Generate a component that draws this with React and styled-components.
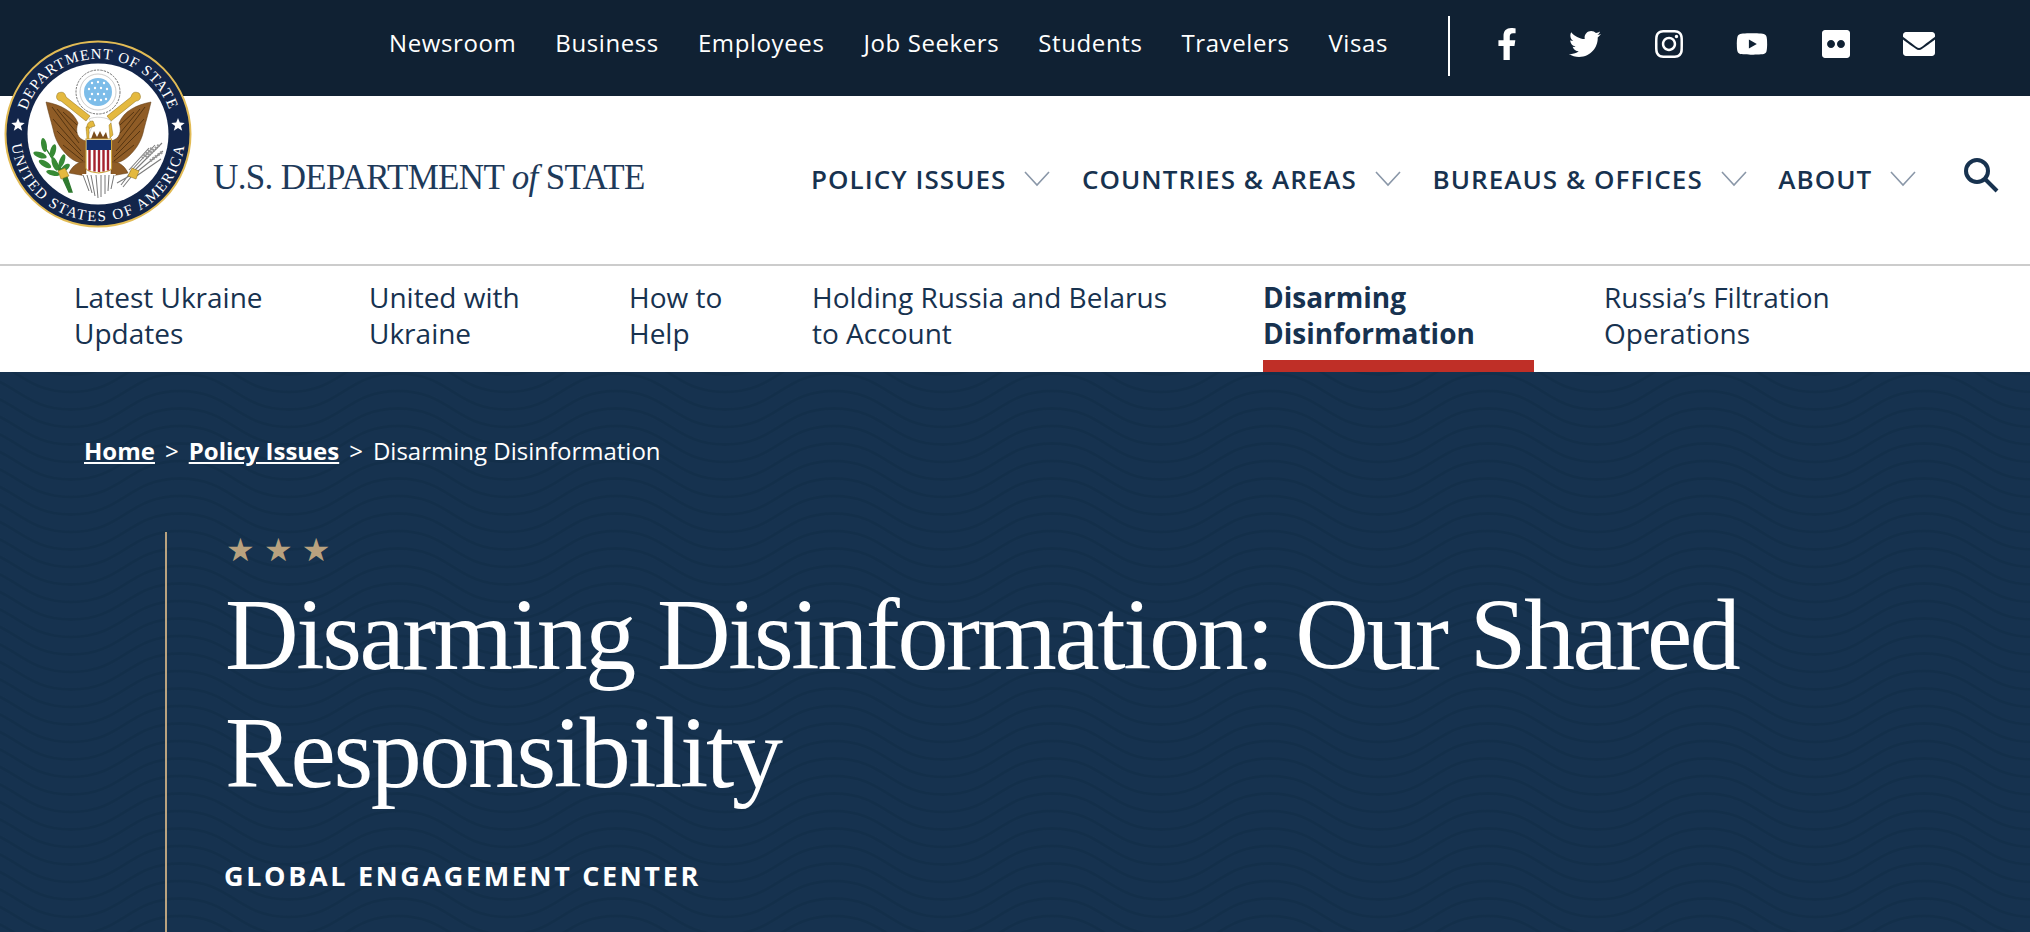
import React from 'react';
import styled, { createGlobalStyle } from 'styled-components';
import { FaFacebookF, FaTwitter, FaInstagram, FaYoutube, FaFlickr, FaEnvelope } from 'react-icons/fa';

const GlobalStyle = createGlobalStyle`
    html, body {
        margin: 0;
        padding: 0;
        background: #16324f;
    }
    body {
        font-family: "Open Sans", "Liberation Sans", sans-serif;
        overflow: hidden;
    }
`;

// faint wave texture behind the hero
const waveLines = [-3, -2, -1, 0, 1, 2, 3, 4]
    .map(i => {
        const y = 8 + i * 17.5;
        return `<path d="M0 ${y} C52 ${y} 57 ${y + 36} 109 ${y + 36} S166 ${y} 218 ${y}"/>`;
    })
    .join('');
const wave = encodeURIComponent(
    `<svg xmlns="http://www.w3.org/2000/svg" width="218" height="70"><g fill="none" stroke="#0e2a43" stroke-opacity=".36" stroke-width="3">${waveLines}</g></svg>`
);

const utilityLinks = ['Newsroom', 'Business', 'Employees', 'Job Seekers', 'Students', 'Travelers', 'Visas'];
const socialIcons = [FaFacebookF, FaTwitter, FaInstagram, FaYoutube, FaFlickr, FaEnvelope];
const mainLinks = ['POLICY ISSUES', 'COUNTRIES & AREAS', 'BUREAUS & OFFICES', 'ABOUT'];
const subLinks = [
    { label: ['Latest Ukraine', 'Updates'], width: 295 },
    { label: ['United with', 'Ukraine'], width: 260 },
    { label: ['How to', 'Help'], width: 183 },
    { label: ['Holding Russia and Belarus', 'to Account'], width: 451 },
    { label: ['Disarming', 'Disinformation'], width: 341, active: true },
    { label: ['Russia’s Filtration', 'Operations'], width: 300 },
];

const Seal = () => (
    <SealSvg viewBox='0 0 190 190'>
        <defs>
            <path id='sealTop' d='M 22.6 114.4 A 75 75 0 1 1 167.4 114.4' />
            <path id='sealBottom' d='M 11 72.5 A 87 87 0 1 0 179 72.5' />
        </defs>
        <circle cx='95' cy='95' r='92.5' fill='#12254a' stroke='#e2bb55' strokeWidth='2' />
        <circle cx='95' cy='95' r='70.5' fill='#fff' />
        <SealText><textPath href='#sealTop' startOffset='50%' textAnchor='middle' letterSpacing='1'>DEPARTMENT OF STATE</textPath></SealText>
        <SealText><textPath href='#sealBottom' startOffset='50%' textAnchor='middle' letterSpacing='1.9'>UNITED STATES OF AMERICA</textPath></SealText>
        <polygon points='15,79 16.8,83.6 21.7,83.9 17.9,87 19.2,91.8 15,89.1 10.8,91.8 12.1,87 8.3,83.9 13.2,83.6' fill='#fff' />
        <polygon points='175,79 176.8,83.6 181.7,83.9 177.9,87 179.2,91.8 175,89.1 170.8,91.8 172.1,87 168.3,83.9 173.2,83.6' fill='#fff' />

        {/* crest */}
        <circle cx='95' cy='53' r='22' fill='#fff' stroke='#666' strokeWidth='.9' strokeDasharray='2.4 1' />
        <circle cx='95' cy='53' r='18' fill='#fff' stroke='#999' strokeWidth='.5' />
        <circle cx='95' cy='53' r='14' fill='#7dbde9' />
        <g fill='#fff'>
            <circle cx='89' cy='44' r='1.2' /><circle cx='95' cy='43' r='1.2' /><circle cx='101' cy='44' r='1.2' />
            <circle cx='86' cy='50' r='1.2' /><circle cx='92' cy='49' r='1.2' /><circle cx='98' cy='49' r='1.2' /><circle cx='104' cy='50' r='1.2' />
            <circle cx='89' cy='55' r='1.2' /><circle cx='95' cy='55' r='1.2' /><circle cx='101' cy='55' r='1.2' />
            <circle cx='87' cy='60' r='1.2' /><circle cx='92' cy='61' r='1.2' /><circle cx='98' cy='61' r='1.2' /><circle cx='103' cy='60' r='1.2' />
        </g>

        {/* wings */}
        <path d='M43 63 C58 66 70 72 75 84 C72 92 74 100 83 102 L83 125 C76 124 70 122 64 116 C56 108 52 100 50 90 C48 82 45 72 43 63 Z' fill='#8f5c26' stroke='#5f3b14' strokeWidth='.5' />
        <path d='M148 63 C133 66 121 72 116 84 C119 92 117 100 108 102 L108 125 C115 124 121 122 127 116 C135 108 139 100 141 90 C143 82 146 72 148 63 Z' fill='#8f5c26' stroke='#5f3b14' strokeWidth='.5' />
        <g stroke='#4e300f' strokeWidth='.9' fill='none'>
            <path d='M49 68 L76 104 M54 70 L74 94 M60 73 L74 86 M50 80 L78 112 M54 92 L80 118 M60 106 L80 122' />
            <path d='M142 68 L115 104 M137 70 L117 94 M131 73 L117 86 M141 80 L113 112 M137 92 L111 118 M131 106 L111 122' />
        </g>
        {/* lower feathers */}
        <path d='M66 134 C70 126 76 122 83 123 L83 137 Z' fill='#8f5c26' stroke='#5f3b14' strokeWidth='.5' />
        <path d='M125 134 C121 126 115 122 108 123 L108 137 Z' fill='#8f5c26' stroke='#5f3b14' strokeWidth='.5' />
        {/* ribbons */}
        <path d='M55 54 C52 58 54 62 58 62 L83 82 L87 77 L63 58 C62 54 60 52 55 54 Z' fill='#e4b93f' stroke='#8a6a10' strokeWidth='.5' />
        <path d='M136 54 C139 58 137 62 133 62 L108 82 L104 77 L128 58 C129 54 131 52 136 54 Z' fill='#e4b93f' stroke='#8a6a10' strokeWidth='.5' />
        {/* head */}
        <path d='M86 80 C92 77 104 78 108 82 L107 100 L84 100 C86 94 88 90 90 86 Z' fill='#fff' stroke='#aaa' strokeWidth='.5' />
        <path d='M90 82 C85 82 83 86 84 92 C86 89 88 88 92 87 Z' fill='#e4b93f' stroke='#8a6a10' strokeWidth='.5' />
        <path d='M83 88 L84 100 L86 100 L86 88 Z M108 84 L110 96 L107 99 L106 86 Z' fill='#e4b93f' stroke='#8a6a10' strokeWidth='.4' />
        <path d='M88 100 L91 92 L94 98 L97 92 L100 98 L103 93 L105 100 Z' fill='#7b4d1d' />
        {/* shield */}
        <path d='M83 100 H108.5 V129 C108.5 133 100 133 95.7 134 C91 133 83 133 83 129 Z' fill='#fff' stroke='#cda63d' strokeWidth='1.1' />
        <rect x='83.6' y='101' width='24.4' height='10' fill='#12306f' />
        <path d='M86.5 111 V131.5 M91.5 111 V132.5 M96 111 V133 M100.5 111 V132.5 M105 111 V131.5' stroke='#a5232f' strokeWidth='2.4' />
        {/* tail */}
        <path d='M79 135 L86 152 L90 148 L94 158 L98 148 L102 154 L106 148 L113 135 Z' fill='#fff' />
        <path d='M80 136 L86 152 M84 136 L89 154 M88 136 L92 157 M93 136 L95 159 M98 136 L98 158 M102 136 L102 155 M106 136 L105 152 M111 136 L108 150' stroke='#666' strokeWidth='.9' fill='none' />
        {/* olive */}
        <path d='M42 108 C50 122 60 130 64 138 L69 153 L66 153 L60 140' stroke='#2f7a2f' strokeWidth='1.4' fill='#2f7a2f' />
        <g fill='#378a35'>
            <ellipse cx='41' cy='106' rx='2.8' ry='7' transform='rotate(-10 41 106)' />
            <ellipse cx='37' cy='116' rx='2.8' ry='7' transform='rotate(-70 37 116)' />
            <ellipse cx='50' cy='112' rx='2.8' ry='7' transform='rotate(15 50 112)' />
            <ellipse cx='42' cy='125' rx='2.8' ry='7' transform='rotate(-60 42 125)' />
            <ellipse cx='52' cy='125' rx='2.8' ry='7' transform='rotate(-20 52 125)' />
            <ellipse cx='59' cy='122' rx='2.6' ry='7' transform='rotate(20 59 122)' />
            <ellipse cx='50' cy='134' rx='2.6' ry='7' transform='rotate(-75 50 134)' />
            <ellipse cx='62' cy='129' rx='2.6' ry='6' transform='rotate(50 62 129)' />
        </g>
        {/* arrows */}
        <g stroke='#7d7d7d' strokeWidth='1.1' fill='none'>
            <path d='M159 104 L128 135 M152 106 L127 133 M146 109 L126 131 M160 112 L130 136 M158 120 L132 138' />
            <path d='M128 136 L114 144 M127 134 L118 146 M128 138 L120 148' />
        </g>
        <g stroke='#999' strokeWidth='3' strokeDasharray='2 1.2' fill='none'>
            <path d='M156 106 L143 119 M149 109 L139 119 M159 113 L147 122' />
        </g>
        {/* talons */}
        <path d='M55 132 L62 129 L66 137 L58 140 Z' fill='#e4b93f' stroke='#8a6a10' strokeWidth='.5' />
        <path d='M136 132 L129 129 L125 137 L133 140 Z' fill='#e4b93f' stroke='#8a6a10' strokeWidth='.5' />
    </SealSvg>
);

export default function App() {
    return (
        <Page>
            <GlobalStyle />
            <UtilityBar>
                <UtilityLinks>
                    {utilityLinks.map(link => <UtilityLink key={link}>{link}</UtilityLink>)}
                </UtilityLinks>
                <SocialList>
                    {socialIcons.map((Icon, i) => <SocialItem key={i}><Icon /></SocialItem>)}
                </SocialList>
            </UtilityBar>
            <Masthead>
                <Seal />
                <Wordmark>U.S. DEPARTMENT <em>of</em> STATE</Wordmark>
                <MainNav>
                    {mainLinks.map(link => (
                        <MainLink key={link}>
                            {link}
                            <svg width='26' height='16' viewBox='0 0 26 16' fill='none' stroke='#8a97a8' strokeWidth='1.6'>
                                <path d='M1 1 L13 14 L25 1' />
                            </svg>
                        </MainLink>
                    ))}
                </MainNav>
                <SearchButton>
                    <svg width='36' height='36' viewBox='0 0 36 36' fill='none' stroke='#17324f' strokeWidth='4'>
                        <circle cx='14' cy='14' r='11' />
                        <path d='M22 22 L34 34' />
                    </svg>
                </SearchButton>
            </Masthead>
            <SubNav>
                {subLinks.map(({ label, width, active }) => (
                    <SubLink key={label[0]} $width={width}>
                        <SubLabel $active={active}>{label[0]}<br />{label[1]}</SubLabel>
                    </SubLink>
                ))}
            </SubNav>
            <Hero>
                <Breadcrumb>
                    <Crumb>Home</Crumb><Sep>&gt;</Sep><Crumb>Policy Issues</Crumb><Sep>&gt;</Sep>Disarming Disinformation
                </Breadcrumb>
                <HeroBody>
                    <Stars>★★★</Stars>
                    <Title>Disarming Disinformation: Our Shared Responsibility</Title>
                    <Subtitle>GLOBAL ENGAGEMENT CENTER</Subtitle>
                </HeroBody>
            </Hero>
        </Page>
    );
}

const Page = styled.div`
    width: 2030px;
    height: 932px;
    overflow: hidden;
    position: relative;
`;

const UtilityBar = styled.div`
    height: 96px;
    box-sizing: border-box;
    padding: 0 0 4px 389px;
    background: #102133;
    display: flex;
    align-items: center;
`;

const UtilityLinks = styled.nav`
    display: flex;
    gap: 39px;
    width: 1059px;
    margin-bottom: 8px;
`;

const UtilityLink = styled.a`
    color: #fff;
    font-size: 24px;
    letter-spacing: 0.6px;
    white-space: nowrap;
`;

const SocialList = styled.div`
    height: 60px;
    border-left: 2px solid #fff;
    display: flex;
    align-items: center;
    gap: 51.5px;
    padding: 0 0 4px 41px;
    box-sizing: border-box;
`;

const SocialItem = styled.span`
    display: flex;
    color: #fff;
    font-size: 32px;

    &:first-child {
        margin-right: -5.5px;
    }
`;

const Masthead = styled.header`
    height: 168px;
    background: #fff;
    display: flex;
    align-items: center;
    border-bottom: 2px solid #ccc;
    padding-left: 213px;
`;

const SealSvg = styled.svg`
    position: absolute;
    left: 3px;
    top: 39px;
    width: 190px;
    height: 190px;
`;

const SealText = styled.text`
    font-family: "Liberation Serif", serif;
    font-size: 15px;
    fill: #fff;
`;

const Wordmark = styled.div`
    margin-top: -4px;
    font-family: "Liberation Serif", serif;
    font-size: 35px;
    color: #1e3a5a;
    white-space: nowrap;
    width: 598px;
    letter-spacing: -0.65px;

    em {
        font-style: italic;
    }
`;

const MainNav = styled.nav`
    display: flex;
    gap: 31.5px;
    margin-top: -3px;
`;

const MainLink = styled.a`
    display: flex;
    align-items: center;
    gap: 18px;
    color: #17324f;
    font-size: 26px;
    font-weight: 600;
    letter-spacing: 1.05px;
    white-space: nowrap;
`;

const SearchButton = styled.span`
    margin-left: 47px;
    margin-top: -10px;
    display: flex;
`;

const SubNav = styled.nav`
    height: 106px;
    background: #fff;
    display: flex;
    padding-left: 74px;
`;

const SubLink = styled.a`
    width: ${p => p.$width}px;
    height: 106px;
`;

const SubLabel = styled.span`
    display: block;
    width: ${p => (p.$active ? '271px' : 'auto')};
    height: 106px;
    box-sizing: border-box;
    padding-top: 13px;
    color: #17324f;
    font-size: 28px;
    line-height: 36px;
    font-weight: ${p => (p.$active ? 700 : 400)};
    border-bottom: ${p => (p.$active ? '12px solid #bf2f27' : 'none')};
    white-space: nowrap;
`;

const Hero = styled.section`
    height: 560px;
    box-sizing: border-box;
    background-color: #16324f;
    background-image: url("data:image/svg+xml,${wave}");
    background-position: 180px 11px;
    padding: 62px 0 0 84px;
`;

const Breadcrumb = styled.div`
    color: #fff;
    font-size: 24px;
    line-height: 34px;
`;

const Crumb = styled.a`
    font-weight: 700;
    text-decoration: underline;
`;

const Sep = styled.span`
    margin: 0 10px;
`;

const HeroBody = styled.div`
    margin: 64px 0 0 81px;
    border-left: 2px solid #b9a27f;
    padding: 0 0 0 58px;
    height: 400px;
`;

const Stars = styled.div`
    margin-left: 1px;
    color: #b9a27f;
    font-size: 32px;
    line-height: 36px;
    letter-spacing: 9.2px;
    font-family: "DejaVu Sans", sans-serif;
`;

const Title = styled.h1`
    margin: 8px 0 0;
    width: 1640px;
    color: #fff;
    font-family: "Liberation Serif", serif;
    font-size: 102px;
    line-height: 118px;
    font-weight: 400;
    letter-spacing: -2.42px;
`;

const Subtitle = styled.div`
    margin: 45px 0 0 -1px;
    color: #fff;
    font-size: 27px;
    font-weight: 700;
    letter-spacing: 2.65px;
`;
